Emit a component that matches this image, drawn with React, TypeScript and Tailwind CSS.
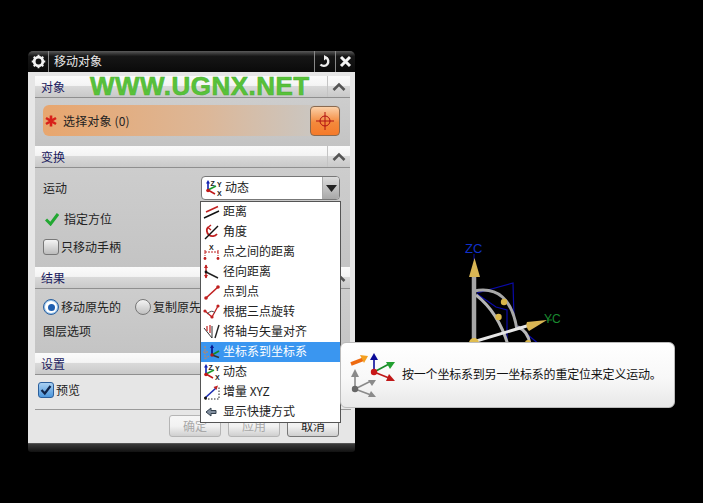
import React from "react";

const Chevron = () => (
  <svg width="14" height="10" viewBox="0 0 14 10">
    <path d="M1.5 8 L7 2.5 L12.5 8" fill="none" stroke="#555" strokeWidth="2.6" />
  </svg>
);

function Section({ title, children, gray = true, h }: { title: string; children: React.ReactNode; gray?: boolean; h: string }) {
  return (
    <div className="flex flex-col">
      <div className="h-[22px] flex border-b border-[#8f8f8f] bg-[linear-gradient(#fbfbfb_0%,#f4f4f4_45%,#d9d9d9_50%,#c9c9c9_100%)]">
        <div className="flex-1 pl-[6px] text-[12px] leading-[21px] text-[#1c1c60]">{title}</div>
        <div className="w-[23px] border-l border-[#c4c4c4] flex items-center justify-center">
          <Chevron />
        </div>
      </div>
      <div className={`${h} ${gray ? "bg-[linear-gradient(#cdcdcd,#c4c4c4)]" : ""} relative`}>{children}</div>
    </div>
  );
}

const DynIcon = () => (
  <svg width="18" height="18" viewBox="0 0 18 18">
    <path d="M4 11 V3" stroke="#1020b0" strokeWidth="1.6" />
    <path d="M4 1 L6 4.5 H2 Z" fill="#1020b0" />
    <path d="M4 11 L12 7" stroke="#1a9a2a" strokeWidth="1.6" />
    <path d="M4 11 L11 15" stroke="#c01818" strokeWidth="1.6" />
    <circle cx="4" cy="11.5" r="1.8" fill="#c01818" />
    <text x="6.5" y="7" fontSize="7" fontWeight="700" fill="#222" fontFamily="Liberation Sans">Z</text>
    <text x="13" y="8" fontSize="7" fontWeight="700" fill="#222" fontFamily="Liberation Sans">Y</text>
    <text x="13" y="17" fontSize="7" fontWeight="700" fill="#222" fontFamily="Liberation Sans">X</text>
  </svg>
);

const icons: React.ReactNode[] = [
  <svg key="a" width="18" height="18" viewBox="0 0 18 18">
    <path d="M4 9 L16 3.5" stroke="#c02020" strokeWidth="1.6" />
    <path d="M2 15 L17 8" stroke="#111" strokeWidth="1.4" />
  </svg>,
  <svg key="b" width="18" height="18" viewBox="0 0 18 18">
    <path d="M6 4 A5.5 5.5 0 1 0 15 11" fill="none" stroke="#c02020" strokeWidth="1.8" />
    <path d="M9 2 L6 4.5 L9 7" fill="none" stroke="#c02020" strokeWidth="1.4" />
    <path d="M3 16 L16 3" stroke="#111" strokeWidth="1.4" />
  </svg>,
  <svg key="c" width="18" height="18" viewBox="0 0 18 18">
    <path d="M3 7 V11 M16 7 V11" stroke="#c02020" strokeWidth="1" />
    <path d="M3 9 H16" stroke="#c02020" strokeWidth="1" strokeDasharray="2 1" />
    <path d="M3 12 V15 M16 12 V15" stroke="#c02020" strokeWidth="1" strokeDasharray="1 1" />
    <circle cx="3" cy="15.5" r="1.4" fill="#c02020" />
    <circle cx="16" cy="15.5" r="1.4" fill="#c02020" />
    <text x="7" y="7" fontSize="7" fontWeight="700" fill="#222" fontFamily="Liberation Sans">X</text>
  </svg>,
  <svg key="d" width="18" height="18" viewBox="0 0 18 18">
    <path d="M4 2 V15" stroke="#c02020" strokeWidth="1.4" />
    <path d="M2 5 L4 1.5 L6 5 Z M2 12 L4 15.5 L6 12 Z" fill="#c02020" />
    <path d="M4 9 L16 15" stroke="#222" strokeWidth="1.4" />
    <circle cx="4" cy="9" r="1.4" fill="#111" />
  </svg>,
  <svg key="e" width="18" height="18" viewBox="0 0 18 18">
    <path d="M4 15 L16 4" stroke="#c02020" strokeWidth="1.6" />
    <circle cx="4" cy="15" r="1.8" fill="#c02020" />
    <circle cx="16" cy="4" r="1.8" fill="#c02020" />
  </svg>,
  <svg key="f" width="18" height="18" viewBox="0 0 18 18">
    <path d="M3 8 L10 14 L16 3" fill="none" stroke="#c02020" strokeWidth="1.3" />
    <path d="M5 11 Q10 6 13 10" fill="none" stroke="#444" strokeWidth="1" />
    <circle cx="3" cy="8" r="1.6" fill="#c02020" />
    <circle cx="10" cy="14" r="1.6" fill="#c02020" />
    <circle cx="16" cy="3" r="1.6" fill="#c02020" />
  </svg>,
  <svg key="g" width="18" height="18" viewBox="0 0 18 18">
    <path d="M2 5 L10 15 L10 3" fill="none" stroke="#333" strokeWidth="1" />
    <path d="M5 3 V8 M8 2 V10" stroke="#c02020" strokeWidth="1.2" />
    <path d="M13 15 L17 2" stroke="#222" strokeWidth="1.4" />
  </svg>,
  <svg key="h" width="18" height="18" viewBox="0 0 18 18">
    <g stroke="#a08a80" strokeWidth="1.4" fill="none" strokeDasharray="2 1">
      <path d="M3 3 V16 M1 9 H7 M3 16 L7 13" />
    </g>
    <path d="M10 12 V4" stroke="#0a1a90" strokeWidth="1.8" />
    <path d="M10 1.5 L12 5 H8 Z" fill="#0a1a90" />
    <path d="M10 12 L17 8" stroke="#138a28" strokeWidth="1.8" />
    <path d="M10 12 L17 14.5" stroke="#333" strokeWidth="1.8" />
    <circle cx="10" cy="12" r="1.7" fill="#b31818" />
  </svg>,
  <DynIcon key="i" />,
  <svg key="j" width="18" height="18" viewBox="0 0 18 18">
    <path d="M3 15 L14 5" stroke="#1a2ab0" strokeWidth="1.6" />
    <path d="M16 2.5 L14.5 7 L11.5 4 Z" fill="#c02020" />
    <path d="M3 16 H17 V3" fill="none" stroke="#222" strokeWidth="1" strokeDasharray="1.5 1.5" />
    <circle cx="3.5" cy="15" r="1.5" fill="#111" />
  </svg>,
  <svg key="k" width="18" height="18" viewBox="0 0 18 18">
    <path d="M4 9 L9 5 V7.5 H14 V10.5 H9 V13 Z" fill="#8390a0" stroke="#33404e" strokeWidth="1" />
  </svg>,
];

const items = ["距离", "角度", "点之间的距离", "径向距离", "点到点", "根据三点旋转", "将轴与矢量对齐", "坐标系到坐标系", "动态", "增量 XYZ", "显示快捷方式"];

const Radio = ({ on }: { on?: boolean }) => (
  <div className={`w-[16px] h-[16px] rounded-full border flex items-center justify-center ${on ? "border-[#2b5f9c] bg-[#9cc6ee]" : "border-[#777] bg-[linear-gradient(#f4f4f4,#c0c0c0)]"}`}>
    {on && (
      <div className="w-[12px] h-[12px] rounded-full bg-white flex items-center justify-center">
        <div className="w-[7px] h-[7px] rounded-full bg-[#1f5fb0]" />
      </div>
    )}
  </div>
);

const Btn = ({ label, off }: { label: string; off?: boolean }) => (
  <div className={`w-[52px] h-[22px] rounded-[3px] border text-center text-[12px] leading-[20px] bg-[linear-gradient(#f6f6f6,#f2f2f2_50%,#cfcfcf)] ${off ? "border-[#b5b5b5] text-[#a8a8a8]" : "border-[#777] text-[#222]"}`}>
    {label}
  </div>
);

export default function App() {
  return (
    <div className="relative w-[703px] h-[503px] bg-black overflow-hidden font-['Noto_Sans_CJK_SC','Liberation_Sans',sans-serif] text-[12px] text-[#222]">
      {/* 3D handle on the canvas */}
      <svg className="absolute left-[440px] top-[235px]" width="130" height="110" viewBox="440 235 130 110">
        <g fill="none">
          <path d="M477 293 L513 283 L514 318" stroke="#0a0aa8" strokeWidth="1.2" />
          <path d="M477 294 L496 307 L507 310 L507 342" stroke="#0a0aa8" strokeWidth="1.2" />
          <path d="M516 325 L540 345" stroke="#0a0aa8" strokeWidth="1.2" />
          <path d="M474 291 Q510 284 517 330" stroke="#a8a8a8" strokeWidth="3" />
          <path d="M476 295 Q498 312 508 345" stroke="#b4b4b4" strokeWidth="3" />
          <path d="M518 327 Q528 331 530 344" stroke="#b8b8b8" strokeWidth="3" />
          <path d="M474 276 V342" stroke="#a6a6a6" strokeWidth="4.5" />
          <path d="M473 342 L530 325" stroke="#e6e6e6" strokeWidth="3" />
          <path d="M474 254 V260" stroke="#0a0aa8" strokeWidth="1" />
          <path d="M547 320 H552" stroke="#0a8a20" strokeWidth="1" />
        </g>
        <path d="M474.5 258 L480 277 L469 277 Z" fill="#d9b654" />
        <path d="M547 320 L529 331 Q525 326 527 322 Z" fill="#d9b654" />
        <circle cx="504" cy="302" r="3.2" fill="#d9b64a" />
        <circle cx="498.5" cy="317" r="3.2" fill="#d9b64a" />
        <circle cx="474" cy="343" r="5" fill="#e0bd50" />
        <circle cx="528" cy="343" r="3" fill="#d9b64a" />
        <text x="465" y="253" fontSize="13" fill="#1030c8" fontFamily="Liberation Sans">ZC</text>
        <text x="544" y="323" fontSize="12" fill="#1a8a30" fontFamily="Liberation Sans">YC</text>
      </svg>

      {/* dialog */}
      <div className="absolute left-[28px] top-[51px] w-[327px] flex flex-col">
        <div className="h-[21px] rounded-t-[5px] flex items-stretch text-white bg-[linear-gradient(#5a5a5a,#161616_25%,#0a0a0a)]">
          <div className="w-[21px] flex items-center justify-center border-r border-[#888]">
            <svg width="15" height="15" viewBox="0 0 16 16">
              <circle cx="8" cy="8" r="4.6" fill="none" stroke="#f2f2f2" strokeWidth="3" />
              <path d="M8 0.8 V3.5 M8 12.5 V15.2 M0.8 8 H3.5 M12.5 8 H15.2 M2.9 2.9 L4.8 4.8 M11.2 11.2 L13.1 13.1 M13.1 2.9 L11.2 4.8 M4.8 11.2 L2.9 13.1" stroke="#f2f2f2" strokeWidth="2" />
            </svg>
          </div>
          <div className="flex-1 pl-[5px] text-[12px] leading-[20px] text-[#e8e8e8]">移动对象</div>
          <div className="w-[21px] flex items-center justify-center border-l border-[#888]">
            <svg width="14" height="14" viewBox="0 0 14 14">
              <path d="M8 2.5 A4.5 4.5 0 1 1 2.5 9.5" fill="none" stroke="#eee" strokeWidth="2.4" />
              <path d="M6 0 L10 2.6 L6 5.5 Z" fill="#eee" />
            </svg>
          </div>
          <div className="w-[20px] flex items-center justify-center border-l border-[#888]">
            <svg width="13" height="13" viewBox="0 0 13 13">
              <path d="M2 2 L11 11 M11 2 L2 11" stroke="#f4f4f4" strokeWidth="3" />
            </svg>
          </div>
        </div>

        <div className="h-[372px] pl-[7px] pr-[5px] pt-[4px] bg-[#e6e6e6] flex flex-col border-b border-[#555]">
          <Section title="对象" h="h-[48px]">
            <div className="ml-[8px] mr-[9px] mt-[7px] h-[31px] rounded-[6px] flex items-center bg-[linear-gradient(90deg,#e8a66e,#dcb798_55%,#cbc6c0_90%,#c8c8c8)]">
              <svg className="ml-[2px] mr-[6px]" width="12" height="12" viewBox="0 0 12 12">
                <path d="M6 0.5 V11.5 M1 3 L11 9 M11 3 L1 9" stroke="#d8201a" strokeWidth="2.6" />
              </svg>
              <span className="text-[12px] tracking-[0.15px]">选择对象 (0)</span>
              <div className="ml-auto mr-[1px] w-[30px] h-[30px] rounded-[4px] border border-[#8a6a50] flex items-center justify-center bg-[linear-gradient(#fbd0a8,#f48a3c_55%,#f57a2a)]">
                <svg width="20" height="20" viewBox="0 0 20 20">
                  <circle cx="10" cy="10" r="5" fill="none" stroke="#b01010" strokeWidth="1" />
                  <path d="M1 10 H19 M10 1 V19" stroke="#b01010" strokeWidth="1" />
                </svg>
              </div>
            </div>
          </Section>
          <Section title="变换" h="h-[99px]">
            <div className="px-[8px] pt-[7px] flex items-center justify-between h-[33px]">
              <span>运动</span>
            </div>
            <div className="absolute left-[166px] top-[8px] w-[139px] h-[24px] rounded-[4px] border border-[#777] bg-white flex items-center pl-[2px]">
              <DynIcon />
              <span className="ml-[3px] pb-[2px]">动态</span>
              <div className="ml-auto w-[17px] h-full rounded-r-[3px] border-l border-[#aaa] bg-[linear-gradient(#dcdcdc,#a8a8a8)] flex items-center justify-center">
                <svg width="11" height="7" viewBox="0 0 11 7"><path d="M0 0 H11 L5.5 7 Z" fill="#222" /></svg>
              </div>
            </div>
            <div className="px-[10px] pt-[6px] flex items-center gap-[5px] h-[26px] mt-[2px]">
              <svg width="14" height="14" viewBox="0 0 14 14">
                <path d="M1 7.5 L5.5 12 L13 2" fill="none" stroke="#22a832" strokeWidth="3" />
              </svg>
              <span>指定方位</span>
            </div>
            <div className="px-[8px] flex items-center gap-[2px] mt-[9px]">
              <div className="w-[16px] h-[16px] rounded-[3px] border border-[#777] bg-[linear-gradient(#f4f4f4,#bcbcbc)]" />
              <span>只移动手柄</span>
            </div>
          </Section>
          <Section title="结果" h="h-[64px]">
            <div className="px-[8px] pt-[9px] flex items-center">
              <div className="w-[92px] flex items-center gap-[2px]">
                <Radio on />
                <span>移动原先的</span>
              </div>
              <div className="flex items-center gap-[2px]">
                <Radio />
                <span>复制原先的</span>
              </div>
            </div>
            <div className="px-[8px] mt-[6px]">图层选项</div>
          </Section>
          <Section title="设置" gray={false} h="h-[34px]">
            <div className="pl-[3px] pt-[6px] flex items-center gap-[2px]">
              <div className="w-[16px] h-[16px] rounded-[3px] border border-[#2b5f9c] bg-[linear-gradient(#a9d0f2,#4d97dc)] flex items-center justify-center">
                <svg width="12" height="12" viewBox="0 0 12 12"><path d="M1.5 6 L4.8 9.5 L10.5 2" fill="none" stroke="#10254a" strokeWidth="2.2" /></svg>
              </div>
              <span>预览</span>
            </div>
          </Section>
          <div className="h-px bg-[#9a9a9a] -mr-[1px]" />
          <div className="flex justify-end gap-[7px] pt-[5px] pr-[11px]">
            <Btn label="确定" off />
            <Btn label="应用" off />
            <Btn label="取消" />
          </div>
        </div>
        <div className="h-[8px] bg-[linear-gradient(#3a3a3a,#111)] rounded-b-[3px]" />
      </div>

      {/* watermark */}
      <div className="absolute left-[90px] top-[71px] text-[26px] leading-[30px] font-bold font-['Liberation_Sans'] tracking-[0.5px] text-[#58c23a] [-webkit-text-stroke:0.6px_#4fb234] whitespace-nowrap">WWW.UGNX.NET</div>

      {/* dropdown menu */}
      <div className="absolute left-[200px] top-[201px] w-[141px] h-[222px] bg-white border border-[#555] flex flex-col">
        {items.map((t, i) => (
          <div key={t} className={`h-[20px] shrink-0 flex items-center pl-[1px] gap-[3px] ${i === 7 ? "bg-[#3a96f0] text-white" : "text-[#222]"}`}>
            <span className="w-[18px] h-[18px] flex">{icons[i]}</span>
            <span className="pb-[2px]">{t}</span>
          </div>
        ))}
      </div>

      {/* tooltip */}
      <div className="absolute left-[340px] top-[342px] w-[335px] h-[66px] rounded-[6px] border border-[#bbb] bg-[linear-gradient(#ffffff,#f8f8f8_55%,#e8e8e8)] flex items-center">
        <svg className="ml-[7px]" width="52" height="56" viewBox="347 347 52 56">
          <path d="M350 364 L363 359" stroke="#ee6a10" strokeWidth="3.5" />
          <path d="M367 356 L359 355 L363 363 Z" fill="#f4a020" />
          <path d="M354 389 V374 M354 389 L370 381 M354 389 L370 395" stroke="#8a8a8a" strokeWidth="1.6" />
          <path d="M354 369 L358 377 L350 377 Z M375 380 L367 380 L371 386 Z M375 397 L367 397 L370 391 Z" fill="#8a8a8a" />
          <circle cx="354" cy="389" r="3.2" fill="#666" />
          <path d="M373 372 V358 " stroke="#0a0a98" strokeWidth="1.6" />
          <path d="M373 353 L377 360 L369 360 Z" fill="#0a0a98" />
          <path d="M373 372 L388 364" stroke="#1a8a28" strokeWidth="1.6" />
          <path d="M394 362 L385 362 L389 369 Z" fill="#22a030" />
          <path d="M373 372 L388 378" stroke="#c01818" strokeWidth="1.6" />
          <path d="M394 381 L385 381 L388 374 Z" fill="#c01818" />
          <circle cx="373" cy="372" r="3.2" fill="#c81818" />
        </svg>
        <span className="ml-[2px] pb-[2px] text-[12px] tracking-[-0.2px] text-[#111]">按一个坐标系到另一坐标系的重定位来定义运动。</span>
      </div>
    </div>
  );
}
